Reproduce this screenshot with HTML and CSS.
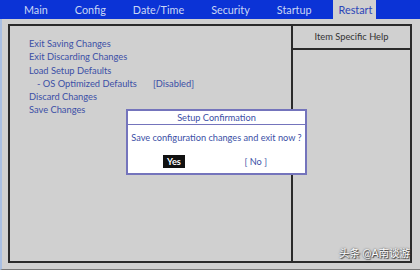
FILE: index.html
```html
<!DOCTYPE html>
<html lang="en">
<head>
    <meta charset="UTF-8">
    <title>Setup Utility - Restart</title>
    <link rel="stylesheet" href="styles.css">
</head>
<body>
    <div class="menu-bar">
        <span class="tab">Main</span>
        <span class="tab">Config</span>
        <span class="tab">Date/Time</span>
        <span class="tab">Security</span>
        <span class="tab">Startup</span>
        <span class="tab active">Restart</span>
    </div>

    <div class="screen">
        <div class="frame">
            <div class="options">
                <div class="item">Exit Saving Changes</div>
                <div class="item">Exit Discarding Changes</div>
                <div class="item">Load Setup Defaults</div>
                <div class="item sub"><span class="label">- OS Optimized Defaults</span><span class="value">[Disabled]</span></div>
                <div class="item">Discard Changes</div>
                <div class="item">Save Changes</div>
            </div>
            <div class="help">
                <div class="help-title">Item Specific Help</div>
            </div>

            <!-- confirmation popup sits over the option list -->
            <div class="dialog">
                <div class="dialog-title">Setup Confirmation</div>
                <div class="dialog-text">Save configuration changes and exit now ?</div>
                <div class="dialog-buttons">
                    <span class="btn selected">Yes</span>
                    <span class="btn">[ No ]</span>
                </div>
            </div>

            <div class="watermark">头条 @A南谈游</div>
        </div>
    </div>
</body>
</html>
```

FILE: styles.css
```css
body {
    margin: 0;
    width: 420px;
    height: 270px;
    overflow: hidden;
    background-color: #d0d0d0;
    font-family: 'Lato', 'Noto Sans', 'Noto Sans CJK SC', sans-serif;
    display: flex;
    flex-direction: column;
}
.menu-bar {
    height: 19px;
    background-color: #0b33d6;
    display: flex;
    align-items: stretch;
    padding-left: 18px;
    gap: 15px;
}
.tab {
    padding: 0 6px;
    font-size: 10.8px;
    line-height: 19px;
    color: #c9d6f5;
}
.tab.active {
    padding-right: 4px;
    background-color: #d0d0d0;
    color: #2c46b8;
}
.screen {
    flex: 1;
    padding: 5px 8px 6px 6px;
    border-left: 2px solid #a9bfe2;
    border-bottom: 1px solid #777;
}
.frame {
    position: relative;
    height: 100%;
    box-sizing: border-box;
    border: 2px solid #2a2a2a;
    display: flex;
}
.options {
    flex: 1;
    padding: 11px 0 0 19px;
    border-right: 2px solid #2a2a2a;
}
.item {
    font-size: 9.3px;
    line-height: 13.3px;
    color: #3b4fa6;
}
.item.sub {
    display: flex;
    padding-left: 8px;
}
.item.sub .label {
    width: 116px;
}
.help {
    width: 117px;
}
.help-title {
    height: 22px;
    border-bottom: 2px solid #2a2a2a;
    font-size: 9.3px;
    line-height: 22px;
    text-align: center;
    color: #333;
}
.dialog {
    position: absolute;
    left: 116px;
    top: 83px;
    width: 177px;
    height: 62px;
    background-color: #fff;
    border: 2px solid #7474bc;
    color: #3b4fa6;
    font-size: 9.2px;
    white-space: nowrap;
}
.dialog-title {
    height: 13px;
    line-height: 13px;
    text-align: center;
    border-bottom: 1px solid #7474bc;
}
.dialog-text {
    line-height: 26px;
    text-align: center;
}
.dialog-buttons {
    display: flex;
    justify-content: space-between;
    padding: 4px 36px 0 35px;
}
.btn {
    line-height: 13px;
    padding: 0 2px;
}
.btn.selected {
    padding: 0 4px;
    background-color: #111;
    color: #fff;
    font-weight: bold;
}
.watermark {
    position: absolute;
    right: 0;
    bottom: 1px;
    font-size: 10.5px;
    color: #fff;
    text-shadow: 0 0 2px #444, 1px 1px 1px #333;
}
```
